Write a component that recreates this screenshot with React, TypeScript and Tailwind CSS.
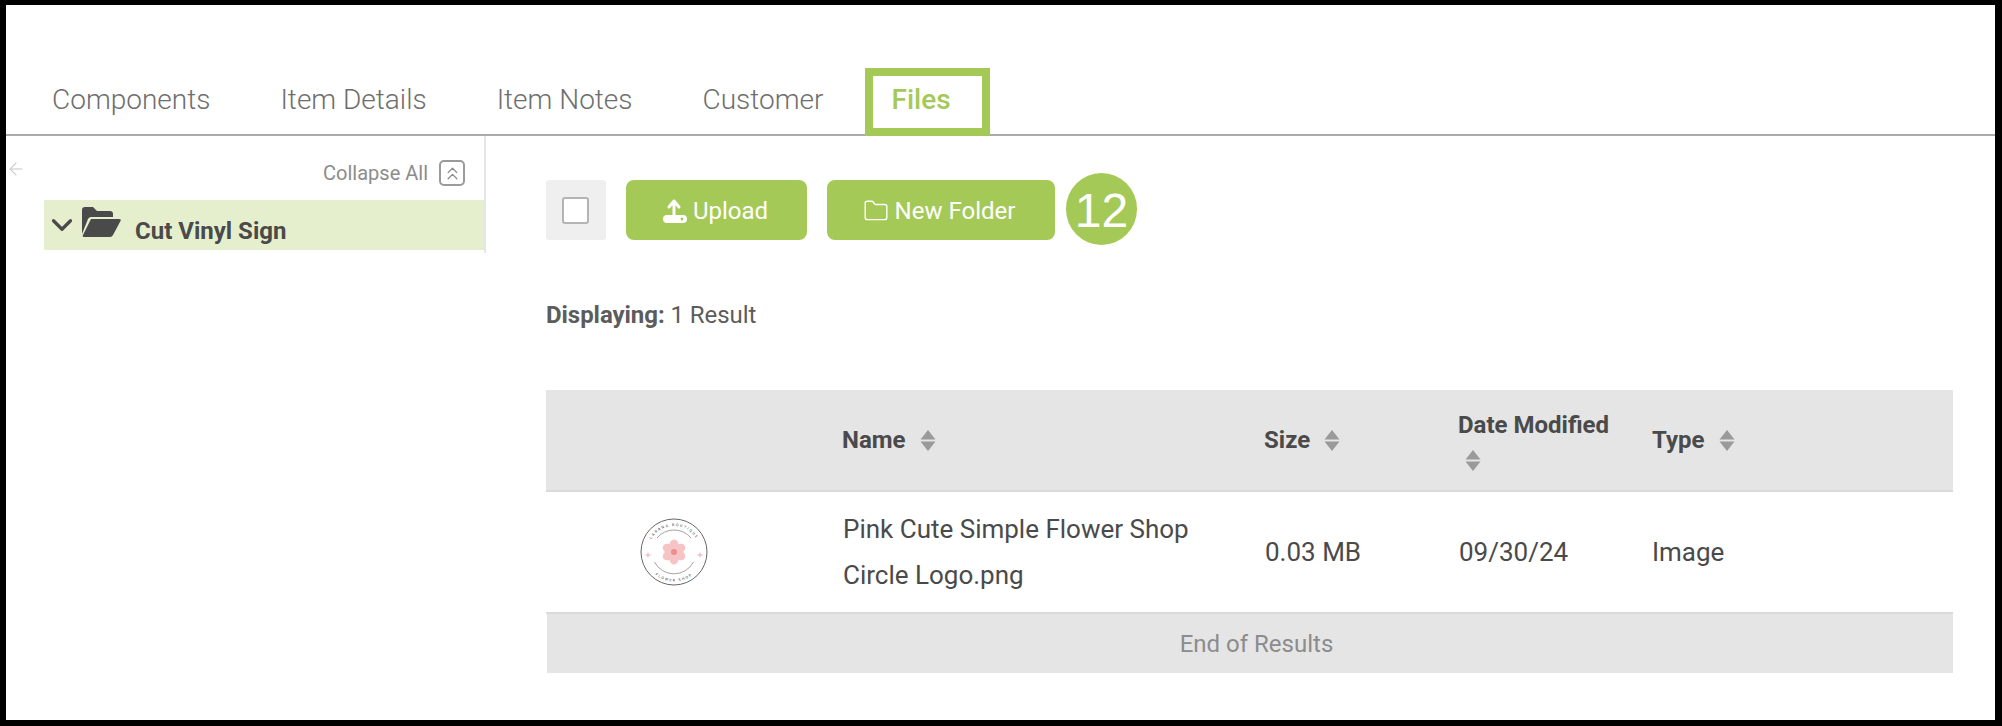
import React from 'react';
import { ArrowLeft, ChevronDown, ChevronsUp, Folder } from 'lucide-react';

const TABS = ['Components', 'Item Details', 'Item Notes', 'Customer', 'Files'];
const COLUMNS = 'grid grid-cols-[296px_422px_194px_195px_1fr]';

function SortIcon({ className = '' }: { className?: string }) {
  return (
    <svg width="16" height="21" viewBox="0 0 16 21" className={className}>
      <path d="M8 0 L15.500 9.500 H0.500 Z" fill="#9a9a9a" />
      <path d="M0.500 11.500 H15.500 L8 21 Z" fill="#9a9a9a" />
    </svg>
  );
}

function UploadIcon() {
  return (
    <svg width="26" height="26" viewBox="0 0 26 26" fill="none">
      <path d="M12 17 V4 M7 9 L12 3 L17 9" stroke="#fff" strokeWidth="3" strokeLinecap="round" strokeLinejoin="round" />
      <rect x="1" y="17" width="24" height="8" rx="4" fill="#fff" />
      <circle cx="20" cy="21" r="1.4" fill="#a5c957" />
    </svg>
  );
}

function OpenFolderIcon() {
  return (
    <svg width="39" height="30" viewBox="0 0 39 30">
      <path d="M0 27 V3 Q0 0 3 0 H11 L15 4 H28 Q31 4 31 7 V10 H9 Q7 10 6 12 Z" fill="#4a4a4a" />
      <path d="M9 12 H37 Q39.500 12 38.500 14 L31 28 Q30 30 28 30 H2 Q0 30 1 28 Z" fill="#4a4a4a" />
    </svg>
  );
}

// tiny flower shop badge used as the file thumbnail
function LogoThumb() {
  const petals = [0, 60, 120, 180, 240, 300];
  return (
    <svg width="68" height="68" viewBox="0 0 68 68">
      <defs>
        <path id="arcTop" d="M8 34 A26 26 0 0 1 60 34" />
        <path id="arcBottom" d="M4.500 34 A29.500 29.500 0 0 0 63.500 34" />
      </defs>
      <circle cx="34" cy="34" r="33" fill="#fff" stroke="#555" strokeWidth="0.9" />
      <path d="M17 20 A22 22 0 0 1 51 20" fill="none" stroke="#666" strokeWidth="0.6" />
      <path d="M14.500 44 A22 22 0 0 0 53.500 44" fill="none" stroke="#666" strokeWidth="0.6" />
      <text fontSize="3.600" fill="#333" letterSpacing="1.500" textAnchor="middle" style={{ fontFamily: 'Roboto, sans-serif' }}>
        <textPath href="#arcTop" startOffset="50%">LARANA BOUTIQUE</textPath>
      </text>
      <text fontSize="3.600" fill="#333" letterSpacing="1.500" textAnchor="middle" style={{ fontFamily: 'Roboto, sans-serif' }}>
        <textPath href="#arcBottom" startOffset="50%">FLOWER SHOP</textPath>
      </text>
      {petals.map((a) => (
        <ellipse key={a} cx="34" cy="27" rx="4.500" ry="5.500" fill="#f6c4c4" transform={`rotate(${a} 34 34)`} />
      ))}
      <circle cx="34" cy="34" r="3" fill="#ef8d8d" />
      <path d="M5.500 37 H10.500 M8 34.500 V39.500 M57.500 37 H62.500 M60 34.500 V39.500" stroke="#ef8d8d" strokeWidth="0.7" />
    </svg>
  );
}

export default function App() {
  return (
    <div className="h-screen bg-white border-black border-t-[5px] border-l-[6px] border-r-[7px] border-b-[6px] font-['Roboto',sans-serif] text-[#4a4a4a] overflow-hidden">
      {/* Tabs */}
      <div className="h-[131px] border-b-2 border-[#aaaaaa] flex items-end pl-[18px] gap-[14px]">
        {TABS.map((tab) => (
          <div
            key={tab}
            className={
              tab === 'Files'
                ? 'h-[68px] -mb-[2px] flex items-center pl-[18px] pr-[31px] pb-[5px] border-8 border-[#a5c957] text-[#a5c957] text-[28px] font-medium'
                : 'h-[68px] -mb-[2px] flex items-center px-5 pb-[5px] border-8 border-transparent text-[#6e6e6e] text-[28px] font-light'
            }
          >
            {tab}
          </div>
        ))}
      </div>

      <div className="flex">
        {/* Folder tree */}
        <aside className="w-[480px] h-[117px] border-r-2 border-[#e6e6e6] shrink-0">
          <div className="h-[64px] flex items-start justify-between pt-[22px] pr-[19px]">
            <ArrowLeft className="w-[20px] h-[20px] mt-[1px] text-[#c4c4c4]" strokeWidth={1.25} />
            <div className="flex items-center gap-[11px]">
              <span className="text-[20px] text-[#8c8c8c]">Collapse All</span>
              <span className="w-[26px] h-[26px] border-2 border-[#9a9a9a] rounded-[5px] flex items-center justify-center">
                <ChevronsUp className="w-[21px] h-[21px] text-[#8c8c8c]" strokeWidth={1.5} />
              </span>
            </div>
          </div>
          <div className="ml-[38px] h-[50px] bg-[#e5efcd] flex items-center">
            <ChevronDown className="w-[34px] h-[34px] ml-[1px] text-[#4a4a4a] shrink-0" strokeWidth={2.25} />
            <div className="ml-[3px] -mt-[7px]">
              <OpenFolderIcon />
            </div>
            <span className="ml-[14px] mt-[11px] text-[24px] font-bold">Cut Vinyl Sign</span>
          </div>
        </aside>

        {/* Files panel */}
        <main className="flex-1 pl-[60px] pr-[42px] pt-[44px]">
          <div className="flex items-center h-[60px]">
            <div className="w-[60px] h-[60px] bg-[#efefef] rounded-[3px] flex items-center justify-center">
              <div className="w-[27px] h-[27px] mr-[2px] bg-white border-2 border-[#b4b4b4] rounded-[3px]" />
            </div>
            <button className="ml-5 w-[181px] h-[60px] pt-[1px] pr-[3px] bg-[#a5c957] rounded-[8px] flex items-center justify-center gap-[5px] text-white text-[24px]">
              <UploadIcon />
              Upload
            </button>
            <button className="ml-5 w-[228px] h-[60px] pt-[1px] pr-[4px] bg-[#a5c957] rounded-[8px] flex items-center justify-center gap-[6px] text-white text-[24px]">
              <Folder className="w-[26px] h-[26px]" strokeWidth={1.25} />
              New Folder
            </button>
            <div className="ml-[11px] -mt-[2px] pt-[3px] w-[71px] h-[72px] rounded-full bg-[#a5c957] flex items-center justify-center text-white text-[48px] font-['Liberation_Sans',sans-serif]">
              12
            </div>
          </div>

          <p className="mt-[60px] text-[24px] tracking-[-0.05px] leading-[30px] text-[#5c5c5c]">
            <span className="font-bold">Displaying:</span> 1 Result
          </p>

          {/* Results table */}
          <div className="mt-[60px]">
            <div className={`${COLUMNS} h-[102px] bg-[#e5e5e5] border-b-2 border-[#dadada] items-center font-bold text-[24px]`}>
              <div />
              <div className="flex items-center gap-[14px]">
                Name <SortIcon />
              </div>
              <div className="flex items-center gap-[14px]">
                Size <SortIcon />
              </div>
              <div className="-mt-[3px] leading-[38px]">
                Date Modified
                <SortIcon className="ml-[7px] mt-[6px]" />
              </div>
              <div className="-ml-px flex items-center gap-[14px]">
                Type <SortIcon />
              </div>
            </div>
            <div className={`${COLUMNS} h-[122px] border-b-2 border-[#dadada] items-center text-[26px]`}>
              <div className="flex justify-center pr-[40px]">
                <LogoThumb />
              </div>
              <div className="pl-px leading-[46px] pr-[60px]">Pink Cute Simple Flower Shop Circle Logo.png</div>
              <div className="pl-px">0.03 MB</div>
              <div className="pl-px">09/30/24</div>
              <div className="-ml-px">Image</div>
            </div>
            <div className="h-[59px] ml-px pl-[13px] bg-[#e5e5e5] flex items-center justify-center text-[24px] text-[#8c8c8c]">
              End of Results
            </div>
          </div>
        </main>
      </div>
    </div>
  );
}
